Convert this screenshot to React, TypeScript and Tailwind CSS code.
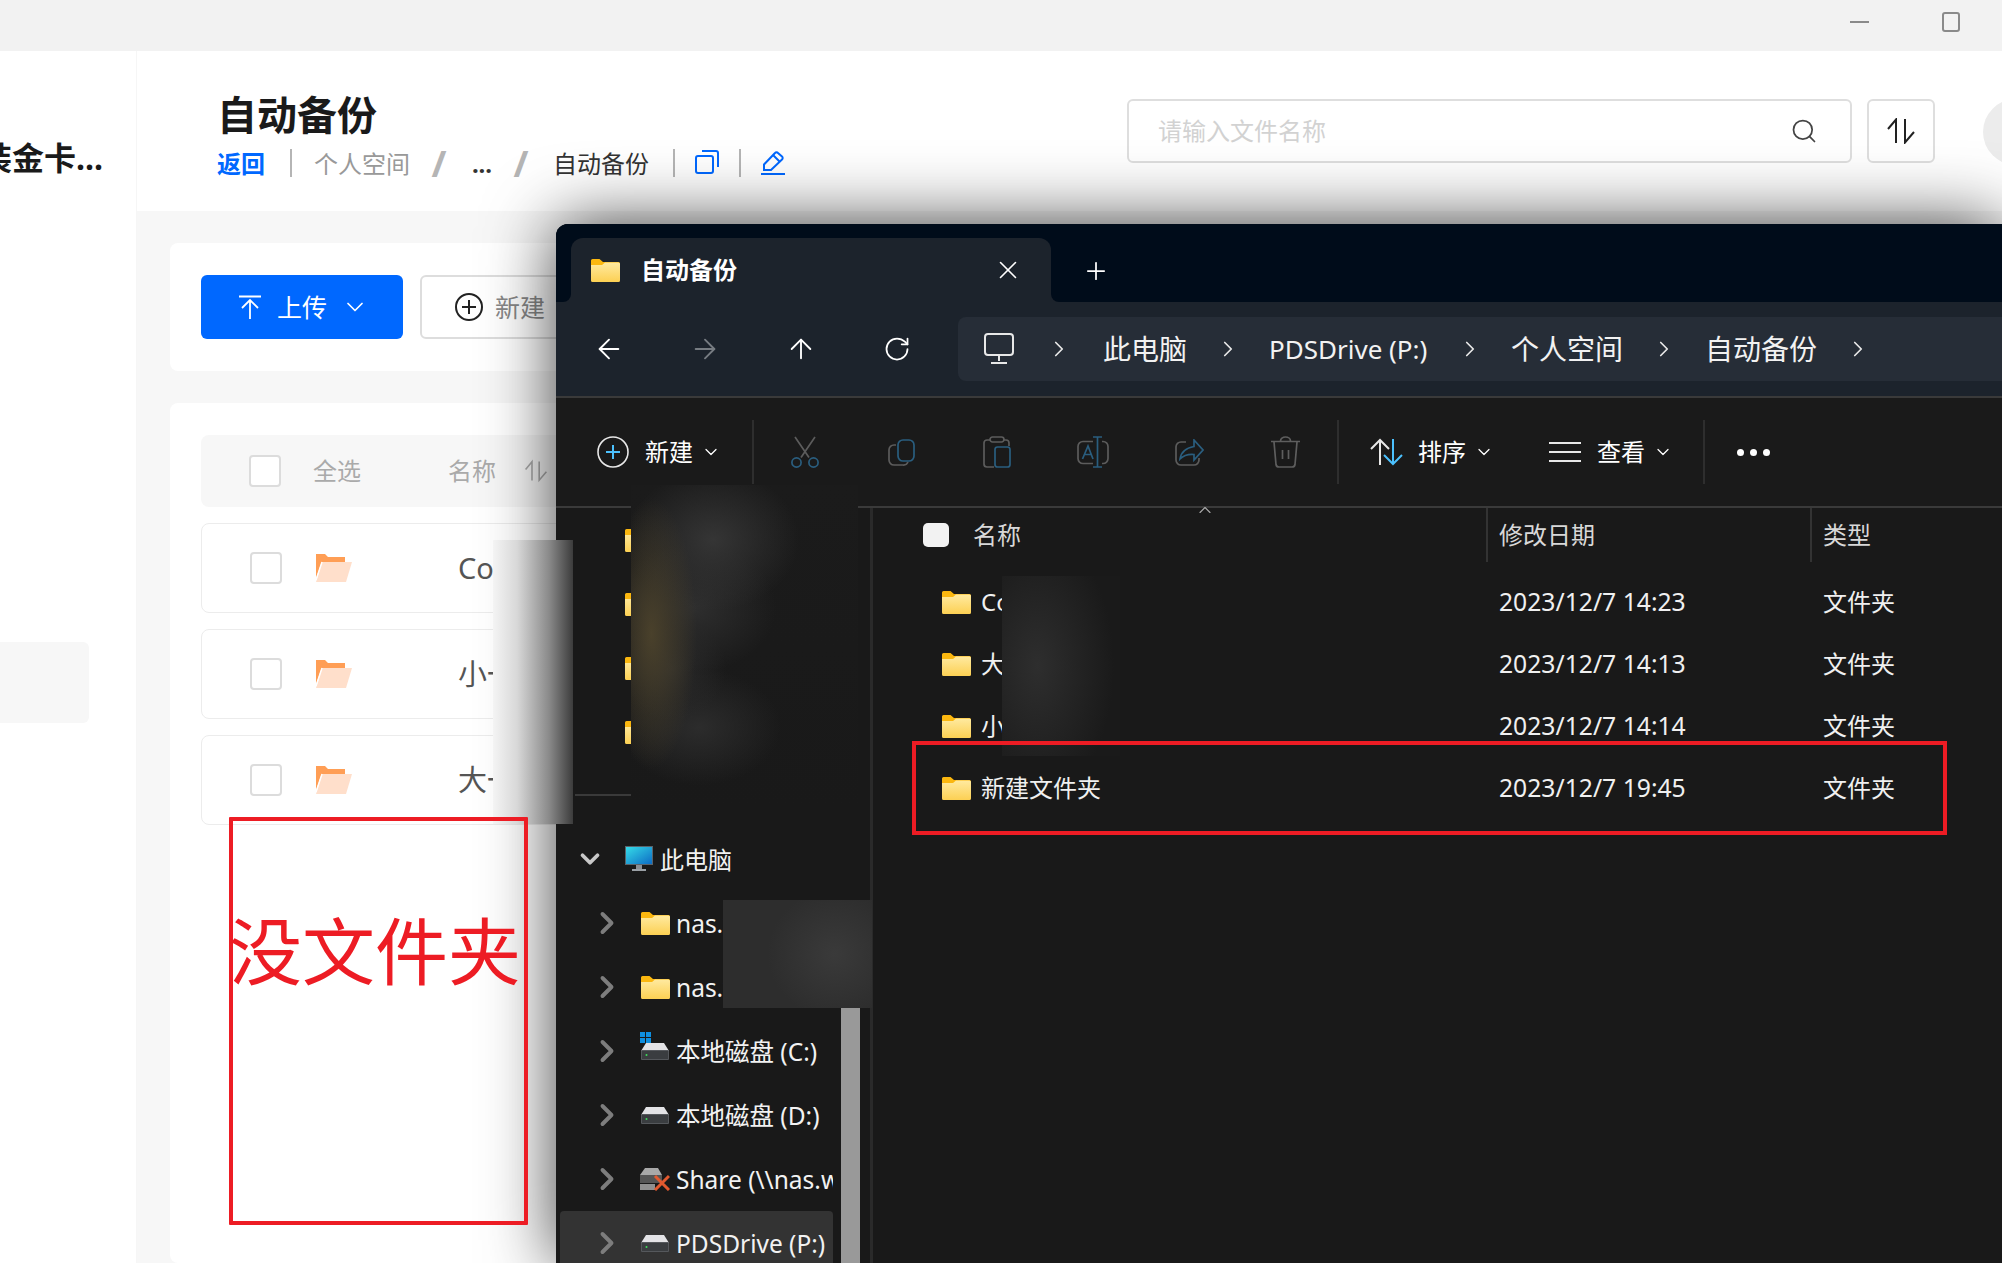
import { ArrowLeft, ArrowRight, ArrowUp, ChevronDown, ChevronRight, Plus, RotateCw, Search, X } from 'lucide-react';

function SortArrows({ className }: { className?: string }) {
  return (
    <svg viewBox="0 0 30 26" fill="none" stroke="currentColor" strokeWidth="2" className={className}>
      <path d="M10 25V1.5L2 11" />
      <path d="M19 1v23.5L28 14" />
    </svg>
  );
}

function WinFolder() {
  return (
    <svg viewBox="0 0 29 23" className="h-[23px] w-[29px] shrink-0">
      <defs>
        <linearGradient id="wf" x1="0" y1="0" x2="0" y2="1">
          <stop offset="0" stopColor="#ffeaa0" />
          <stop offset="1" stopColor="#fcd053" />
        </linearGradient>
      </defs>
      <path d="M0 1.5A1.5 1.5 0 0 1 1.5 0h7l3.5 3h15.5A1.5 1.5 0 0 1 29 4.5V9H0z" fill="#fbb70f" />
      <path d="M0 6h11l3-2.5h13.5A1.5 1.5 0 0 1 29 5v16.5a1.5 1.5 0 0 1-1.5 1.5h-26A1.5 1.5 0 0 1 0 21.5z" fill="url(#wf)" />
    </svg>
  );
}

function OrangeFolder() {
  return (
    <svg viewBox="0 0 36 28" className="h-[28px] w-[36px] shrink-0">
      <path d="M0 0h9l3 3h17v7H5L0 24z" fill="#ff9e55" />
      <path d="M6 8h30l-6 20H0z" fill="#ffdfcb" />
      <path d="M6 8 0 26" stroke="#fff" strokeWidth="1.5" />
    </svg>
  );
}

function Disk() {
  return (
    <svg viewBox="0 0 28 17" className="h-[17px] w-[28px] shrink-0">
      <path d="M5 0h18l5 8H0z" fill="#e3e3e6" />
      <rect x="0" y="7" width="28" height="10" rx="1" fill="#55585c" />
      <rect x="1" y="8" width="26" height="8" fill="#3a3d40" />
      <circle cx="5.5" cy="12" r="1" fill="#3dde5a" />
    </svg>
  );
}

function NavRow({ icon, label, active }: { icon: React.ReactNode; label: string; active?: boolean }) {
  return (
    <div className={`ml-[4px] flex h-[64px] w-[273px] items-center overflow-hidden rounded-[4px] pl-[29px] ${active ? 'bg-[#333333]' : ''}`}>
      <ChevronRight size={36} strokeWidth={2.6} className="shrink-0 text-[#7d7d7d]" />
      <div className="ml-[16px] flex w-[28px] shrink-0 justify-center">{icon}</div>
      <span className="ml-[7px] whitespace-nowrap pt-[2px] text-[24.5px] text-[#f2f2f2]">{label}</span>
    </div>
  );
}

function FileRow({ name, date }: { name: string; date: string }) {
  return (
    <div className="grid h-[62px] grid-cols-[613px_324px_1fr] items-center text-[24px] text-[#f0f0f0]">
      <div className="flex items-center gap-[10px] pl-[69px]">
        <WinFolder />
        <span>{name}</span>
      </div>
      <span className="pl-[13px] text-[24.7px]">{date}</span>
      <span className="pl-[13px]">文件夹</span>
    </div>
  );
}

function PageRow({ name }: { name: string }) {
  return (
    <div className="flex h-[90px] items-center rounded-[8px] border border-[#ececec] bg-white pl-[48px]">
      <div className="h-[32px] w-[32px] rounded-[4px] border-2 border-[#dcdcdc]" />
      <div className="ml-[34px]"><OrangeFolder /></div>
      <span className="ml-[106px] text-[29px] text-[#555555]">{name}</span>
    </div>
  );
}

function Tool({ children }: { children: React.ReactNode }) {
  return <div className="flex w-[96px] justify-center">{children}</div>;
}

const chevronSlot = 'flex w-[82px] shrink-0 justify-center text-[#e8e8e8]';

export default function App() {
  return (
    <div className="relative h-[1263px] w-[2002px] overflow-hidden bg-white [font-family:'Noto_Sans','Noto_Sans_CJK_SC',sans-serif]">
      {/* title bar */}
      <div className="flex h-[51px] items-start justify-end bg-[#f2f2f2] pr-[42px] pt-[12px]">
        <div className="mr-[73px] mt-[9px] h-[2px] w-[19px] bg-[#8a8a8a]" />
        <div className="h-[20px] w-[18px] rounded-[3px] border-2 border-[#8a8a8a]" />
      </div>

      <div className="flex h-[1212px]">
        {/* sidebar */}
        <div className="w-[137px] shrink-0 overflow-hidden border-r border-[#f6f6f6]">
          <div className="mt-[83px] flex h-[48px] items-center justify-end pr-[33px] text-[32px] font-bold text-[#1a1a1a]">
            <span className="whitespace-nowrap">装金卡...</span>
          </div>
          <div className="mt-[460px] h-[81px] w-[89px] rounded-r-[6px] bg-[#f7f7f7]" />
        </div>

        <div className="min-w-0 flex-1 bg-[#f7f7f7]">
          {/* page header */}
          <div className="flex h-[160px] justify-between overflow-hidden bg-white pl-[80px]">
            <div className="pt-[40px]">
              <div className="h-[48px] text-[40px] font-bold leading-[48px] text-[#1a1a1a]">自动备份</div>
              <div className="mt-[7px] flex h-[36px] items-center text-[24px] text-[#999999]">
                <span className="font-bold text-[#0068ff]">返回</span>
                <div className="-mt-[2px] ml-[25px] mr-[22px] h-[28px] w-[2px] bg-[#b5b5b5]" />
                <span>个人空间</span>
                <span className="w-[58px] text-center text-[36px] font-bold leading-none text-[#b5b5b5]">/</span>
                <span className="w-[28px] text-center font-bold text-[#333333]">...</span>
                <span className="w-[50px] text-center text-[36px] font-bold leading-none text-[#b5b5b5]">/</span>
                <span className="ml-[7px] text-[#333333]">自动备份</span>
                <div className="-mt-[2px] ml-[24px] mr-[20px] h-[28px] w-[2px] bg-[#b5b5b5]" />
                <svg viewBox="0 0 24 24" fill="none" stroke="#0068ff" strokeWidth="2" className="-mt-[4px] h-[24px] w-[24px]">
                  <rect x="1" y="6" width="17" height="17" rx="2" />
                  <path d="M7 1h14a2 2 0 0 1 2 2v14" />
                </svg>
                <div className="-mt-[2px] ml-[20px] mr-[20px] h-[28px] w-[2px] bg-[#b5b5b5]" />
                <svg viewBox="0 0 24 25" fill="none" stroke="#0068ff" strokeWidth="2" className="-mt-[4px] h-[25px] w-[24px]">
                  <path d="M3 14.5 14 3a2 2 0 0 1 3 0l4 3.5a2 2 0 0 1 0 3L10 20H3z" />
                  <path d="M12 5l6.5 6.5" />
                  <path d="M0 24h24" />
                </svg>
              </div>
            </div>
            <div className="-mr-[47px] flex shrink-0 items-start pt-[48px]">
              <div className="flex h-[64px] w-[725px] items-center justify-between rounded-[6px] border-2 border-[#dedede] bg-white pl-[29px] pr-[32px]">
                <span className="text-[24px] text-[#d2d2d2]">请输入文件名称</span>
                <Search size={28} strokeWidth={1.5} className="text-[#444444]" />
              </div>
              <div className="ml-[15px] flex h-[64px] w-[68px] items-center justify-center rounded-[6px] border-2 border-[#dedede]">
                <SortArrows className="h-[26px] w-[30px] text-[#222222]" />
              </div>
              <div className="ml-[48px] h-[66px] w-[66px] rounded-full bg-[#ececec]" />
            </div>
          </div>

          {/* toolbar card */}
          <div className="ml-[33px] mr-[33px] mt-[32px] flex h-[128px] items-center gap-[17px] rounded-[8px] bg-white pl-[31px]">
            <div className="flex h-[64px] w-[202px] items-center rounded-[6px] bg-[#0068ff] pl-[37px] text-white">
              <svg viewBox="0 0 24 24" fill="none" stroke="currentColor" strokeWidth="1.8" className="h-[24px] w-[24px]">
                <path d="M1 1.5h22M12 24V6M4 13l8-8 8 8" />
              </svg>
              <span className="ml-[15px] pt-[2px] text-[25px]">上传</span>
              <ChevronDown size={28} strokeWidth={1.5} className="ml-[14px]" />
            </div>
            <div className="flex h-[64px] w-[200px] items-center rounded-[6px] border-2 border-[#dddddd] bg-white pl-[33px]">
              <svg viewBox="0 0 28 28" fill="none" stroke="#222222" strokeWidth="2" className="h-[28px] w-[28px]">
                <circle cx="14" cy="14" r="13" />
                <path d="M14 7v14M7 14h14" />
              </svg>
              <span className="ml-[12px] pt-[2px] text-[25px] text-[#888888]">新建</span>
            </div>
          </div>

          {/* file card */}
          <div className="ml-[33px] mr-[33px] mt-[32px] h-[860px] rounded-[8px] bg-white px-[31px] pt-[32px]">
            <div className="flex h-[72px] items-center rounded-[8px] bg-[#f7f7f7] pl-[48px] text-[24px] text-[#aaaaaa]">
              <div className="h-[32px] w-[32px] rounded-[4px] border-2 border-[#dcdcdc] bg-white" />
              <span className="ml-[32px]">全选</span>
              <span className="ml-[87px]">名称</span>
              <SortArrows className="ml-[28px] h-[24px] w-[24px]" />
            </div>
            <div className="mt-[16px] flex flex-col gap-[16px]">
              <PageRow name="Co" />
              <PageRow name="小一" />
              <PageRow name="大一" />
            </div>
          </div>
        </div>
      </div>

      {/* explorer window */}
      <div className="absolute bottom-0 left-[556px] right-0 top-[224px] flex flex-col overflow-hidden rounded-tl-[12px] bg-[#191919] shadow-[0_0_70px_rgba(0,0,0,0.75)]">
        <div className="flex h-[78px] shrink-0 bg-[#1c232c]">
          <div className="w-[15px] rounded-br-[8px] bg-[#000c1a]" />
          <div className="flex w-[480px] items-end bg-[#000c1a]">
            <div className="flex h-[64px] w-full items-center rounded-t-[12px] bg-[#1c232c] pl-[20px] text-white">
              <WinFolder />
              <span className="ml-[21px] text-[24px] font-bold">自动备份</span>
              <X size={30} strokeWidth={1.3} className="ml-[256px]" />
            </div>
          </div>
          <div className="flex flex-1 items-end rounded-bl-[8px] bg-[#000c1a] pl-[31px] text-white">
            <div className="flex h-[62px] items-center"><Plus size={28} strokeWidth={1.5} /></div>
          </div>
        </div>

        <div className="flex h-[94px] shrink-0 items-center bg-[#1c232c] pl-[5px] text-white">
          <div className="flex w-[96px] justify-center"><ArrowLeft size={32} strokeWidth={1.4} /></div>
          <div className="flex w-[96px] justify-center"><ArrowRight size={32} strokeWidth={1.4} className="text-[#777c82]" /></div>
          <div className="flex w-[96px] justify-center"><ArrowUp size={32} strokeWidth={1.4} /></div>
          <div className="flex w-[96px] justify-center"><RotateCw size={28} strokeWidth={1.5} /></div>
          <div className="ml-[13px] flex h-[64px] flex-1 items-center rounded-l-[8px] bg-[#262d37] pl-[26px] text-[28px] text-[#f2f2f2]">
            <svg viewBox="0 0 30 32" fill="none" stroke="#e8e8e8" strokeWidth="2" className="h-[32px] w-[30px] shrink-0">
              <rect x="1" y="1" width="28" height="21" rx="3" />
              <path d="M15 22v6M7 30h16" />
            </svg>
            <div className="flex w-[89px] shrink-0 justify-center text-[#e8e8e8]"><ChevronRight size={26} strokeWidth={1.6} /></div>
            <span className="shrink-0">此电脑</span>
            <div className={chevronSlot}><ChevronRight size={26} strokeWidth={1.6} /></div>
            <span className="w-[160px] shrink-0 whitespace-nowrap text-[26px]">PDSDrive (P:)</span>
            <div className={chevronSlot}><ChevronRight size={26} strokeWidth={1.6} /></div>
            <span className="shrink-0">个人空间</span>
            <div className={chevronSlot}><ChevronRight size={26} strokeWidth={1.6} /></div>
            <span className="shrink-0">自动备份</span>
            <div className={chevronSlot}><ChevronRight size={26} strokeWidth={1.6} /></div>
          </div>
        </div>

        <div className="flex h-[112px] shrink-0 items-center border-y-2 border-[#3a3a3a] bg-[#1a1a1a] pl-[41px] text-[24px] text-white">
          <svg viewBox="0 0 32 32" fill="none" strokeWidth="1.6" className="h-[32px] w-[32px] shrink-0">
            <circle cx="16" cy="16" r="15" stroke="#e8e8e8" />
            <path d="M16 9v14M9 16h14" stroke="#4cc2ff" strokeWidth="2" />
          </svg>
          <span className="ml-[16px]">新建</span>
          <ChevronDown size={20} strokeWidth={1.5} className="ml-[8px]" />
          <div className="ml-[31px] mr-[3px] h-[64px] w-[2px] bg-[#2e2e2e]" />
          <Tool>
            <svg viewBox="0 0 28 32" fill="none" strokeWidth="1.7" className="h-[32px] w-[28px]">
              <path d="M4 1l14 20.5M24 1 10 21.5" stroke="#5c5c5c" />
              <circle cx="5.5" cy="26.5" r="4.6" stroke="#2a5e7f" />
              <circle cx="22.5" cy="26.5" r="4.6" stroke="#2a5e7f" />
            </svg>
          </Tool>
          <Tool>
            <svg viewBox="0 0 27 27" fill="none" strokeWidth="1.7" className="h-[27px] w-[27px]">
              <rect x="10" y="1" width="16" height="21" rx="5" stroke="#2a5e7f" />
              <path d="M8 6H6a5 5 0 0 0-5 5v10a5 5 0 0 0 5 5h9a5 5 0 0 0 5-3" stroke="#5c5c5c" />
            </svg>
          </Tool>
          <Tool>
            <svg viewBox="0 0 28 32" fill="none" strokeWidth="1.7" className="h-[32px] w-[28px]">
              <path d="M7 4H4a3 3 0 0 0-3 3v21a3 3 0 0 0 3 3h7M21 4h2a3 3 0 0 1 3 3v3" stroke="#5c5c5c" />
              <rect x="7" y="1" width="14" height="5" rx="2.5" stroke="#5c5c5c" />
              <rect x="12" y="11" width="15" height="20" rx="2.5" stroke="#2a5e7f" />
            </svg>
          </Tool>
          <Tool>
            <svg viewBox="0 0 32 32" fill="none" strokeWidth="1.7" className="h-[32px] w-[32px]">
              <path d="M16 5.5H6a5 5 0 0 0-5 5v12a5 5 0 0 0 5 5h10M25 5.5h1a5 5 0 0 1 5 5v12a5 5 0 0 1-5 5h-1" stroke="#5c5c5c" />
              <path d="M16 1h9M20.5 1v30M16 31h9M5.5 23l5.5-13 5 13M7.5 18.5h7" stroke="#2a5e7f" />
            </svg>
          </Tool>
          <Tool>
            <svg viewBox="0 0 29 27" fill="none" strokeWidth="1.7" className="h-[27px] w-[29px]">
              <path d="M11 3H6a5 5 0 0 0-5 5v13a5 5 0 0 0 5 5h13a5 5 0 0 0 5-5v-2" stroke="#5c5c5c" />
              <path d="M19 1l9 10-9 10v-5.5C13 15 8 17 5 20c1-7 6-11 14-12.5z" stroke="#2a5e7f" />
            </svg>
          </Tool>
          <Tool>
            <svg viewBox="0 0 29 32" fill="none" stroke="#5e5e5e" strokeWidth="1.7" className="h-[32px] w-[29px]">
              <path d="M0 5.5h29M9.5 5a5 4 0 0 1 10 0M3 6l2 22.5a3 3 0 0 0 3 2.5h13a3 3 0 0 0 3-2.5L26 6M11.5 14v9M17.5 14v9" />
            </svg>
          </Tool>
          <div className="ml-[4px] h-[64px] w-[2px] bg-[#2e2e2e]" />
          <svg viewBox="0 0 33 28" fill="none" strokeWidth="2" className="ml-[31px] h-[28px] w-[33px] shrink-0">
            <path d="M10 27V2M1 11l9-9 9 9" stroke="#e8e8e8" />
            <path d="M23 1v25M14 17l9 9 9-9" stroke="#4cc2ff" />
          </svg>
          <span className="ml-[15px]">排序</span>
          <ChevronDown size={20} strokeWidth={1.5} className="ml-[8px]" />
          <svg viewBox="0 0 32 22" fill="none" stroke="#e8e8e8" strokeWidth="2" className="ml-[55px] h-[22px] w-[32px] shrink-0">
            <path d="M0 2h32M0 11h32M0 20h32" />
          </svg>
          <span className="ml-[16px]">查看</span>
          <ChevronDown size={20} strokeWidth={1.5} className="ml-[8px]" />
          <div className="ml-[30px] h-[64px] w-[2px] bg-[#2e2e2e]" />
          <div className="ml-[32px] flex gap-[6px]">
            <div className="h-[7px] w-[7px] rounded-full bg-white" />
            <div className="h-[7px] w-[7px] rounded-full bg-white" />
            <div className="h-[7px] w-[7px] rounded-full bg-white" />
          </div>
        </div>

        <div className="flex min-h-0 flex-1">
          {/* nav pane */}
          <div className="relative w-[314px] shrink-0 overflow-hidden">
            <div className="absolute bottom-0 left-[285px] top-[402px] w-[19px] bg-[#999999]" />
            <div className="h-[256px] pl-[69px]">
              {[0, 1, 2, 3].map((i) => (
                <div key={i} className="flex h-[64px] items-center"><WinFolder /></div>
              ))}
            </div>
            <div className="mt-[30px] h-[2px] w-[75px] translate-x-[19px] bg-[#3a3a3a]" />
            <div className="mt-[31px] flex h-[64px] items-center pl-[19px]">
              <ChevronDown size={30} strokeWidth={3} className="shrink-0 text-[#c8c8c8]" />
              <svg viewBox="0 0 28 26" className="ml-[20px] h-[26px] w-[28px] shrink-0">
                <defs>
                  <linearGradient id="pc" x1="0" y1="0" x2="1" y2="1">
                    <stop offset="0" stopColor="#35dbe8" />
                    <stop offset="1" stopColor="#0d6cc4" />
                  </linearGradient>
                </defs>
                <rect x="0" y="0" width="28" height="19" fill="#59636b" />
                <rect x="1" y="1" width="26" height="17" fill="url(#pc)" />
                <rect x="11" y="19" width="6" height="4" fill="#8a8f94" />
                <rect x="7" y="23" width="14" height="2" fill="#9aa0a5" />
              </svg>
              <span className="ml-[7px] pt-[2px] text-[24px] text-[#f2f2f2]">此电脑</span>
            </div>
            <NavRow icon={<WinFolder />} label="nas.w" />
            <NavRow icon={<WinFolder />} label="nas.w" />
            <NavRow
              icon={
                <div className="relative">
                  <Disk />
                  <div className="absolute -left-[1px] -top-[11px] grid h-[11px] w-[11px] grid-cols-2 gap-[1px]">
                    <div className="bg-[#0f8fe0]" />
                    <div className="bg-[#0f8fe0]" />
                    <div className="bg-[#0f8fe0]" />
                    <div className="bg-[#0f8fe0]" />
                  </div>
                </div>
              }
              label="本地磁盘 (C:)"
            />
            <NavRow icon={<Disk />} label="本地磁盘 (D:)" />
            <NavRow
              icon={
                <svg viewBox="0 0 30 23" className="h-[23px] w-[30px] shrink-0">
                  <path d="M5 0h13l4 7H0z" fill="#a8a8a8" />
                  <rect x="0" y="7" width="22" height="8" fill="#555555" />
                  <rect x="0" y="16" width="15" height="6" fill="#8f8f8f" />
                  <path d="M15 8l14 14M29 8 15 22" stroke="#e2592f" strokeWidth="3" />
                </svg>
              }
              label="Share (\\nas.w"
            />
            <NavRow icon={<Disk />} label="PDSDrive (P:)" active />
          </div>
          <div className="w-[3px] shrink-0 bg-[#2a2a2a]" />

          {/* file list */}
          <div className="min-w-0 flex-1">
            <div className="relative grid h-[63px] grid-cols-[613px_324px_1fr] text-[24px] text-[#d8d8d8]">
              <ChevronDown size={20} strokeWidth={1.4} className="absolute left-[322px] -top-[8px] rotate-180 text-[#aaaaaa]" />
              <div className="flex h-[54px] items-center pl-[50px]">
                <div className="h-[24px] w-[26px] rounded-[5px] bg-[#f2f2f2]" />
                <span className="ml-[24px]">名称</span>
              </div>
              <div className="flex h-[54px] items-center border-l-2 border-[#333333] pl-[11px]">修改日期</div>
              <div className="flex h-[54px] items-center border-l-2 border-[#333333] pl-[11px]">类型</div>
            </div>
            <FileRow name="Co" date="2023/12/7 14:23" />
            <FileRow name="大" date="2023/12/7 14:13" />
            <FileRow name="小" date="2023/12/7 14:14" />
            <FileRow name="新建文件夹" date="2023/12/7 19:45" />
          </div>
        </div>
      </div>

      {/* privacy blurs laid over the screenshot */}
      <div className="absolute left-[493px] top-[540px] h-[284px] w-[80px] bg-[linear-gradient(90deg,#f4f4f4_0%,#d8d8d8_30%,#8a8a8a_70%,#3c3c3c_100%)]" />
      <div className="absolute left-[631px] top-[485px] h-[323px] w-[227px] bg-[radial-gradient(ellipse_20%_42%_at_9%_46%,rgba(78,68,44,0.9),transparent),radial-gradient(ellipse_38%_22%_at_36%_17%,#353535,transparent),radial-gradient(ellipse_36%_20%_at_28%_38%,#2e2e2e,transparent),radial-gradient(ellipse_24%_16%_at_18%_57%,#2a2a2a,transparent),radial-gradient(ellipse_36%_18%_at_30%_75%,#2c2c2c,transparent),linear-gradient(#1b1b1b,#191919)]" />
      <div className="absolute left-[1002px] top-[576px] h-[180px] w-[118px] bg-[radial-gradient(ellipse_65%_75%_at_30%_50%,#2e2e2e,#1a1a1a)]" />
      <div className="absolute left-[723px] top-[900px] h-[108px] w-[149px] bg-[radial-gradient(ellipse_45%_60%_at_75%_50%,#3a3a3a,#2d2d2d)]" />

      {/* red annotations */}
      <div className="absolute left-[229px] top-[817px] flex h-[408px] w-[299px] flex-col rounded-[1px] border-4 border-[#ed1c24]">
        <span className="-ml-[4px] mt-[82px] whitespace-nowrap text-[73px] leading-[96px] text-[#ed1c24]">没文件夹</span>
      </div>
      <div className="absolute left-[912px] top-[741px] h-[94px] w-[1035px] border-4 border-[#ed1c24]" />
    </div>
  );
}
